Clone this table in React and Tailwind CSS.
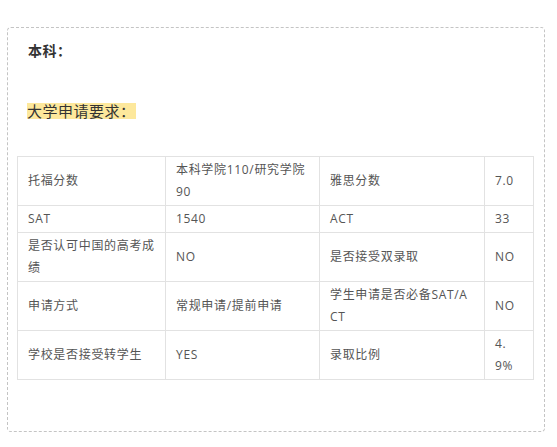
import React from 'react';

const rows = [
  ['托福分数', '本科学院110/研究学院90', '雅思分数', '7.0'],
  ['SAT', '1540', 'ACT', '33'],
  ['是否认可中国的高考成绩', 'NO', '是否接受双录取', 'NO'],
  ['申请方式', '常规申请/提前申请', '学生申请是否必备SAT/ACT', 'NO'],
  ['学校是否接受转学生', 'YES', '录取比例', '4.9%'],
];

export default function App() {
  return (
    <div
      className="w-[557px] h-[447px] bg-white pt-[27px] pl-[7px]"
      style={{ fontFamily: '"Open Sans", "Noto Sans CJK SC", sans-serif' }}
    >
      <div className="w-[538px] h-[405px] border border-dashed border-[#c4c4c4] rounded-[4px]">
        <p className="pt-[12px] pl-[20px] text-[14px] leading-[22px] font-bold text-[#333] tracking-[0.5px]">本科：</p>
        <p className="mt-[41px] pl-[19px] text-[15px] leading-[16px] text-[#333]">
          <span className="inline-block h-[16px] leading-[16px] bg-[#fde89c] tracking-[0.5px]">大学申请要求：</span>
        </p>
        <table className="mt-[37px] ml-[9px] w-[516px] table-fixed border-collapse text-[12px] leading-[22px] text-[#555] tracking-[0.68px]">
          <colgroup>
            <col className="w-[148px]" />
            <col className="w-[154px]" />
            <col className="w-[165px]" />
            <col className="w-[49px]" />
          </colgroup>
          <tbody>
            {rows.map((r, i) => (
              <tr key={i}>
                {r.map((c, j) => (
                  <td
                    key={j}
                    className="border border-[#e2e2e2] px-[10px] py-[2px] align-middle break-all"
                  >
                    {c}
                  </td>
                ))}
              </tr>
            ))}
          </tbody>
        </table>
      </div>
    </div>
  );
}
